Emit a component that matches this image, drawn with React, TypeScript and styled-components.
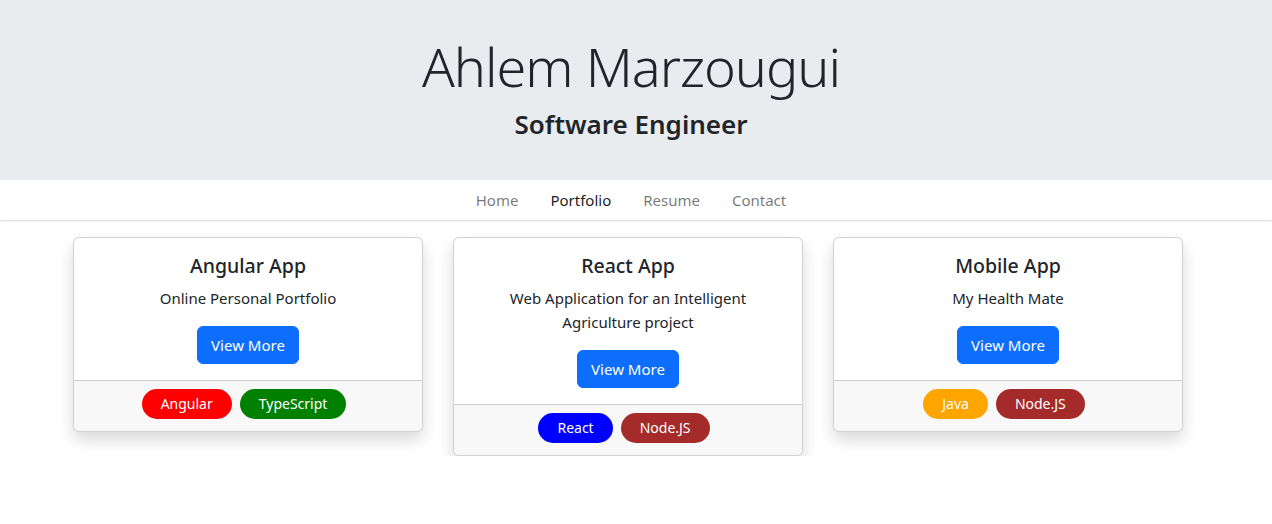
import React from "react";
import styled, { createGlobalStyle } from "styled-components";

const GlobalStyle = createGlobalStyle`
  body {
    margin: 0;
    font-family: "Noto Sans", "Open Sans", sans-serif;
    font-size: 15px;
    line-height: 24px;
    color: #212529;
    background: #fff;
  }
  * { box-sizing: border-box; }
`;

const Header = styled.header`
  background: #e9ecef;
  height: 180px;
  display: flex;
  flex-direction: column;
  align-items: center;
  padding-top: 34px;
  padding-right: 10px;
`;

const Name = styled.h1`
  margin: 0 0 10px;
  font-size: 54px;
  font-weight: 300;
  letter-spacing: -1px;
  line-height: 1.2;
`;

const Role = styled.h3`
  margin: 0;
  font-size: 26px;
  font-weight: 600;
  line-height: 1.2;
`;

const NavBar = styled.nav`
  display: flex;
  justify-content: center;
  padding-right: 10px;
  border-bottom: 1px solid #dee2e6;
  box-shadow: 0 1px 2px rgba(0, 0, 0, 0.06);
`;

const NavLink = styled.a<{ $active?: boolean }>`
  padding: 8px 16px;
  text-decoration: none;
  color: ${(p) => (p.$active ? "rgba(0,0,0,0.9)" : "rgba(0,0,0,0.55)")};
  cursor: pointer;
`;

const Cards = styled.main`
  display: flex;
  justify-content: center;
  align-items: flex-start;
  gap: 30px;
  padding: 16px 16px 0 0;
`;

const Card = styled.div`
  width: 350px;
  border: 1px solid rgba(0, 0, 0, 0.175);
  border-radius: 6px;
  background: #fff;
  box-shadow: 0 8px 16px rgba(0, 0, 0, 0.15);
  overflow: hidden;
  text-align: center;
`;

const CardBody = styled.div`
  padding: 16px;
`;

const CardTitle = styled.h5`
  margin: 0 0 8px;
  font-size: 19.5px;
  font-weight: 500;
  line-height: 24px;
`;

const CardText = styled.p`
  margin: 0 0 16px;
`;

const Button = styled.button`
  font-family: inherit;
  font-size: 15px;
  line-height: 24px;
  padding: 6px 13px;
  border: 1px solid #0d6efd;
  border-radius: 6px;
  background: #0d6efd;
  color: #fff;
  cursor: pointer;
`;

const CardFooter = styled.div`
  display: flex;
  justify-content: center;
  gap: 8px;
  padding: 8px 24px 12px 16px;
  background: #f8f8f8;
  border-top: 1px solid rgba(0, 0, 0, 0.175);
`;

const Badge = styled.span<{ $color: string }>`
  display: inline-flex;
  align-items: center;
  height: 30px;
  padding: 0 19px;
  border-radius: 15px;
  background: ${(p) => p.$color};
  color: #fff;
  font-size: 14px;
`;

const projects = [
  {
    title: "Angular App",
    desc: "Online Personal Portfolio",
    tags: [
      { name: "Angular", color: "red" },
      { name: "TypeScript", color: "green" },
    ],
  },
  {
    title: "React App",
    desc: "Web Application for an Intelligent Agriculture project",
    tags: [
      { name: "React", color: "blue" },
      { name: "Node.JS", color: "brown" },
    ],
  },
  {
    title: "Mobile App",
    desc: "My Health Mate",
    tags: [
      { name: "Java", color: "orange" },
      { name: "Node.JS", color: "brown" },
    ],
  },
];

const App = () => {
  return (
    <>
      <GlobalStyle />
      <Header>
        <Name>Ahlem Marzougui</Name>
        <Role>Software Engineer</Role>
      </Header>
      <NavBar>
        <NavLink>Home</NavLink>
        <NavLink $active>Portfolio</NavLink>
        <NavLink>Resume</NavLink>
        <NavLink>Contact</NavLink>
      </NavBar>
      <Cards>
        {projects.map((p) => (
          <Card key={p.title}>
            <CardBody>
              <CardTitle>{p.title}</CardTitle>
              <CardText>{p.desc}</CardText>
              <Button>View More</Button>
            </CardBody>
            <CardFooter>
              {p.tags.map((t) => (
                <Badge key={t.name} $color={t.color}>
                  {t.name}
                </Badge>
              ))}
            </CardFooter>
          </Card>
        ))}
      </Cards>
    </>
  );
};

export default App;
